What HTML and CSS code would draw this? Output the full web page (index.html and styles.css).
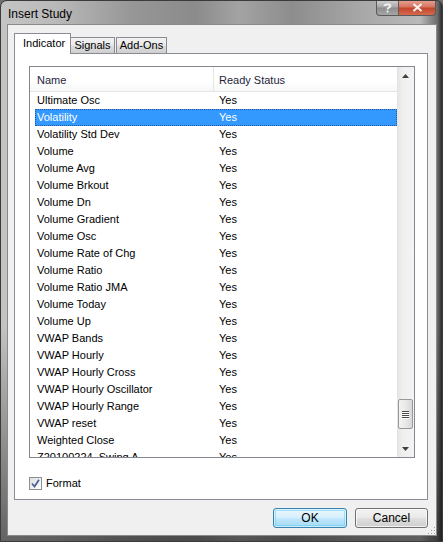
FILE: index.html
```html
<!DOCTYPE html>
<html>
<head>
<meta charset="utf-8">
<title>Insert Study</title>
<link rel="stylesheet" href="styles.css">
</head>
<body>
<div class="window">
  <div class="titlebar">
    <span class="title">Insert Study</span>
    <div class="caption-buttons">
      <div class="cap-btn help">
        <svg width="9" height="10" viewBox="0 0 9 10"><path d="M1.5 3 C1.5 0.8 7.5 0.6 7.5 3 C7.5 4.6 4.5 4.6 4.5 6.5" fill="none" stroke="#f4f4f4" stroke-width="1.8"/><rect x="3.6" y="7.6" width="1.8" height="1.8" fill="#f4f4f4"/></svg>
      </div>
      <div class="cap-btn close">
        <svg width="11" height="9" viewBox="0 0 11 9"><path d="M1.5 1 L9.5 8 M9.5 1 L1.5 8" stroke="#f6f0ee" stroke-width="2.2"/></svg>
      </div>
    </div>
  </div>

  <div class="client">
    <div class="tabstrip">
      <div class="tab active">Indicator</div>
      <div class="tab signals">Signals</div>
      <div class="tab addons">Add-Ons</div>
    </div>

    <div class="tabpanel">
      <div class="listview">
        <div class="list-main">
          <div class="list-header">
            <div class="hcell name-col">Name</div>
            <div class="hcell status-col">Ready Status</div>
          </div>
          <div class="rows">
            <div class="row"><span>Ultimate Osc</span><span>Yes</span></div>
            <div class="row selected"><span>Volatility</span><span>Yes</span></div>
            <div class="row"><span>Volatility Std Dev</span><span>Yes</span></div>
            <div class="row"><span>Volume</span><span>Yes</span></div>
            <div class="row"><span>Volume Avg</span><span>Yes</span></div>
            <div class="row"><span>Volume Brkout</span><span>Yes</span></div>
            <div class="row"><span>Volume Dn</span><span>Yes</span></div>
            <div class="row"><span>Volume Gradient</span><span>Yes</span></div>
            <div class="row"><span>Volume Osc</span><span>Yes</span></div>
            <div class="row"><span>Volume Rate of Chg</span><span>Yes</span></div>
            <div class="row"><span>Volume Ratio</span><span>Yes</span></div>
            <div class="row"><span>Volume Ratio JMA</span><span>Yes</span></div>
            <div class="row"><span>Volume Today</span><span>Yes</span></div>
            <div class="row"><span>Volume Up</span><span>Yes</span></div>
            <div class="row"><span>VWAP Bands</span><span>Yes</span></div>
            <div class="row"><span>VWAP Hourly</span><span>Yes</span></div>
            <div class="row"><span>VWAP Hourly Cross</span><span>Yes</span></div>
            <div class="row"><span>VWAP Hourly Oscillator</span><span>Yes</span></div>
            <div class="row"><span>VWAP Hourly Range</span><span>Yes</span></div>
            <div class="row"><span>VWAP reset</span><span>Yes</span></div>
            <div class="row"><span>Weighted Close</span><span>Yes</span></div>
            <div class="row"><span>Z20100224_Swing A</span><span>Yes</span></div>
          </div>
        </div>
        <div class="vscroll">
          <div class="sb-arrow">
            <svg width="7" height="4" viewBox="0 0 7 4"><path d="M3.5 0 L7 4 L0 4 Z" fill="#404040"/></svg>
          </div>
          <div class="sb-track">
            <div class="sb-thumb" style="margin-top: 315px">
              <span></span><span></span><span></span><span></span>
            </div>
          </div>
          <div class="sb-arrow">
            <svg width="7" height="4" viewBox="0 0 7 4"><path d="M0 0 L7 0 L3.5 4 Z" fill="#404040"/></svg>
          </div>
        </div>
      </div>

      <label class="check-row">
        <span class="checkbox">
          <svg width="9" height="9" viewBox="0 0 9 9"><path d="M1 4.5 L3.5 7.5 L8 0.8" fill="none" stroke="#4a5f97" stroke-width="1.8"/></svg>
        </span>
        <span>Format</span>
      </label>
    </div>

    <div class="button-row">
      <div class="btn default">OK</div>
      <div class="btn">Cancel</div>
    </div>

    <div class="grip"></div>
  </div>
</div>
</body>
</html>
```

FILE: styles.css
```css
html, body {
  margin: 0;
  padding: 0;
  background: #6e6e6e;
}

body {
  font-family: "Liberation Sans", Arial, sans-serif;
  font-size: 11px;
  color: #000;
}

.window {
  width: 443px;
  height: 542px;
  box-sizing: border-box;
  border: 1px solid #3b3b3b;
  border-radius: 7px 7px 0 0;
  display: flex;
  flex-direction: column;
  background:
    linear-gradient(180deg, rgba(0,0,0,0) 0, rgba(0,0,0,0) 60%, rgba(20,20,20,0.55) 100%),
    linear-gradient(90deg, #c4c4c4 0%, #bababa 12%, #969696 30%, #8b8b8b 44%, #a3a3a3 54%, #8d8d8d 66%, #a8a8a8 82%, #b9b9b9 95%, #6a6a6a 99%, #2a2a2a 100%);
  overflow: hidden;
}

/* title bar */
.titlebar {
  height: 23px;
  flex: none;
  display: flex;
  align-items: flex-start;
  padding-left: 7px;
}

.title {
  font-size: 12px;
  line-height: 12px;
  margin-top: 7px;
  color: #000;
}

.caption-buttons {
  margin-left: auto;
  margin-right: 6px;
  display: flex;
  margin-top: -1px;
}

.cap-btn {
  height: 16px;
  box-sizing: border-box;
  display: flex;
  align-items: center;
  justify-content: center;
  border: 1px solid #5a5a5a;
  border-top: none;
}

.cap-btn.help {
  width: 22px;
  border-radius: 0 0 0 4px;
  border-right: none;
  background: linear-gradient(180deg, #d2d2d2 0%, #a8a8a8 48%, #8c8c8c 52%, #a6a6a6 100%);
}

.cap-btn.close {
  width: 38px;
  border-radius: 0 0 4px 0;
  background: linear-gradient(180deg, #e8a596 0%, #d6755f 45%, #c4452b 55%, #d36b4f 100%);
}

/* dialog client area */
.client {
  position: relative;
  flex: 1;
  min-height: 0;
  margin: 0 5px 5px 6px;
  border: 1px solid #8a8a8a;
  background: #f0f0f0;
  padding: 8px 8px 0 6px;
  display: flex;
  flex-direction: column;
}

.tabstrip {
  display: flex;
  align-items: flex-end;
  height: 20px;
  flex: none;
  position: relative;
  z-index: 1;
}

.tab {
  box-sizing: border-box;
  height: 16px;
  border: 1px solid #898c95;
  border-bottom: none;
  background: linear-gradient(180deg, #f2f2f2 0%, #ebebeb 45%, #dddddd 55%, #cfcfcf 100%);
  line-height: 15px;
  text-align: center;
  color: #000;
}

.tab.active {
  width: 57px;
  height: 21px;
  margin-bottom: -1px;
  padding: 0 0 0 8px;
  text-align: left;
  line-height: 19px;
  background: #ffffff;
}

.tab.signals {
  width: 44px;
  border-left: none;
}

.tab.addons {
  width: 51px;
  margin-left: 1px;
}

.tabpanel {
  flex: 1;
  min-height: 0;
  overflow: hidden;
  border: 1px solid #898c95;
  background: #ffffff;
  padding: 12px 12px 0 14px;
  display: flex;
  flex-direction: column;
}

/* list view */
.listview {
  flex: 1;
  border: 1px solid #828790;
  display: flex;
  overflow: hidden;
  min-height: 0;
}

.list-main {
  flex: 1;
  min-height: 0;
  display: flex;
  flex-direction: column;
  overflow: hidden;
}

.list-header {
  flex: none;
  height: 25px;
  display: flex;
  background: linear-gradient(180deg, #ffffff 0%, #ffffff 60%, #f6f7f8 100%);
  border-bottom: 1px solid #e5e5e5;
  box-sizing: border-box;
}

.hcell {
  line-height: 27px;
  color: #1e1e3c;
}

.name-col {
  width: 176px;
  padding-left: 7px;
  border-right: 1px solid #e5e5e5;
}

.status-col {
  padding-left: 5px;
}

.rows {
  flex: 1;
  min-height: 0;
  overflow: hidden;
}

.row {
  display: grid;
  grid-template-columns: 182px 1fr;
  height: 17px;
  line-height: 17px;
  margin-left: 5px;
  white-space: nowrap;
}

.row span {
  padding-left: 2px;
}

.row.selected {
  background: #3399ff;
  color: #ffffff;
  outline: 1px dotted rgba(30, 60, 110, 0.7);
  outline-offset: -1px;
}

/* vertical scroll bar */
.vscroll {
  width: 17px;
  flex: none;
  display: flex;
  flex-direction: column;
  background: linear-gradient(90deg, #e3e3e3 0%, #efefef 30%, #f4f4f4 100%);
}

.sb-arrow {
  height: 17px;
  flex: none;
  display: flex;
  align-items: center;
  justify-content: center;
}

.sb-track {
  flex: 1;
  min-height: 0;
  display: flex;
  flex-direction: column;
}

.sb-thumb {
  flex: none;
  height: 30px;
  margin: 0 1px;
  box-sizing: border-box;
  border: 1px solid #989898;
  border-radius: 2px;
  background: linear-gradient(90deg, #f3f3f3 0%, #e9e9e9 50%, #d8d8d8 100%);
  display: flex;
  flex-direction: column;
  align-items: center;
  justify-content: center;
  gap: 1px;
}

.sb-thumb span {
  width: 7px;
  height: 1px;
  background: #4a4a4a;
  box-shadow: 0 1px 0 #ffffff;
}

/* checkbox */
.check-row {
  flex: none;
  height: 41px;
  box-sizing: border-box;
  padding-top: 19px;
  display: flex;
  align-items: flex-start;
  gap: 4px;
  line-height: 13px;
}

.checkbox {
  width: 13px;
  height: 13px;
  box-sizing: border-box;
  border: 1px solid #8e8f8f;
  background: linear-gradient(135deg, #dcdcdc 0%, #f4f4f4 60%, #ffffff 100%);
  display: flex;
  align-items: center;
  justify-content: center;
}

/* dialog buttons */
.button-row {
  flex: none;
  display: flex;
  justify-content: flex-end;
  gap: 8px;
  padding: 8px 0 7px 0;
}

.btn {
  width: 73px;
  height: 20px;
  box-sizing: border-box;
  border: 1px solid #707070;
  border-radius: 3px;
  background: linear-gradient(180deg, #f2f2f2 0%, #ebebeb 45%, #dddddd 55%, #cfcfcf 100%);
  box-shadow: inset 0 0 0 1px rgba(255,255,255,0.7);
  text-align: center;
  line-height: 18px;
  font-size: 12px;
}

.btn.default {
  width: 74px;
  border-color: #3c7fb1;
  background: linear-gradient(180deg, #eaf6fd 0%, #d9f0fc 45%, #bee6fd 55%, #a7d9f5 100%);
  box-shadow: inset 0 0 0 1px rgba(255,255,255,0.6), inset 0 0 0 2px rgba(72,205,240,0.45);
}

/* size grip in the lower right corner */
.grip {
  position: absolute;
  right: 1px;
  bottom: 1px;
  width: 8px;
  height: 8px;
  background-image: radial-gradient(circle, #a0a0a0 0.8px, transparent 1px);
  background-size: 3px 3px;
  clip-path: polygon(100% 0, 100% 100%, 0 100%);
}
```
